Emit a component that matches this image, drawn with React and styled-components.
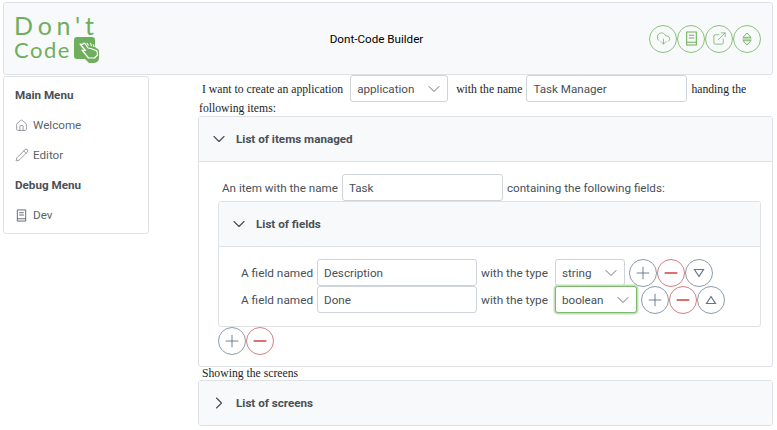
import styled, { createGlobalStyle } from "styled-components";
import { ChevronDown, ChevronRight, Plus, Minus, Home, Pencil, CloudDownload, ExternalLink } from "lucide-react";

const Global = createGlobalStyle`
    html, body { margin: 0; padding: 0; background: #fff; overflow: hidden; }
    body { font-family: "Liberation Serif", serif; font-size: 11.7px; color: #212529; }
`;

function BookIcon({ size = 14, color = "currentColor" }) {
    return (
        <svg width={size} height={size} viewBox="0 0 14 14" fill="none" stroke={color} strokeWidth="1">
            <path d="M2.5 1h9v12h-9z" />
            <path d="M2.5 10.500h9M4.500 4h5M4.500 6.500h5" />
        </svg>
    );
}

function UpDownIcon() {
    return (
        <svg width="14" height="14" viewBox="0 0 14 14" fill="none" stroke="#6fae5e" strokeWidth="0.9">
            <path d="M7 1 11 5.300H3z" />
            <path d="M2.500 7h9" />
            <path d="M7 13 11 8.700H3z" />
        </svg>
    );
}

function HandLogo() {
    return (
        <HandSvg width="26" height="27" viewBox="0 0 26 27">
            <path d="M3 0h15a3 3 0 0 1 3 3v7l4 3v8a5 5 0 0 1-5 5h-5l-4-4H3a3 3 0 0 1-3-3V3a3 3 0 0 1 3-3z" fill="#6fae5e" />
            <path d="M6 7l5.500 6.500-3.500-.5 6.500 8h6l3-3-.5-4-6-2.500-3-.5-3-4.500a1.300 1.300 0 0 0-2.200 1z" fill="#6fae5e" stroke="#fff" strokeWidth="1.200" strokeLinejoin="round" />
            <path d="M13 6l1.500 2.500M16.500 6l1 3M19.500 7.500l.5 2.500" stroke="#fff" strokeWidth="1.100" />
        </HandSvg>
    );
}

function TriangleIcon({ up }) {
    return (
        <svg width="12" height="10" viewBox="0 0 12 10" fill="none" stroke="#64748b" strokeWidth="1.200">
            <path d={up ? "M6 1.500 10.500 8.500H1.500z" : "M6 8.500 10.500 1.500H1.500z"} />
        </svg>
    );
}

function Round({ kind = "plain", children }) {
    return <RoundButton $kind={kind}>{children}</RoundButton>;
}

function Select({ value, width, focused, after = 4 }) {
    return (
        <SelectBox $width={width} $focused={focused} $after={after}>
            <span>{value}</span>
            <ChevronDown size={20} strokeWidth={1.2} color="#6c757d" />
        </SelectBox>
    );
}

function AddButton() {
    return <Round><Plus size={20} strokeWidth={1.1} color="#64748b" /></Round>;
}

function RemoveButton() {
    return <Round kind="danger"><Minus size={20} strokeWidth={1.700} color="#d0423f" /></Round>;
}

function FieldRow({ name, type, selectWidth, focused, up }) {
    return (
        <Row>
            <RowLabel>A field named</RowLabel>
            <TextBox $width={160}>{name}</TextBox>
            <RowLabel>with the type</RowLabel>
            <Select value={type} width={selectWidth} focused={focused} />
            <Buttons>
                <AddButton />
                <RemoveButton />
                <Round><TriangleIcon up={up} /></Round>
            </Buttons>
        </Row>
    );
}

export default function App() {
    return (
        <Page>
            <Global />
            <Header>
                <Logo>
                    <LogoTop>Don't</LogoTop>
                    <LogoBottom>Code<HandLogo /></LogoBottom>
                </Logo>
                <Title>Dont-Code Builder</Title>
                <HeaderButtons>
                    <GreenButton><CloudDownload size={15} strokeWidth={1.2} /></GreenButton>
                    <GreenButton><BookIcon size={15} color="#6fae5e" /></GreenButton>
                    <GreenButton><ExternalLink size={15} strokeWidth={1.2} /></GreenButton>
                    <GreenButton><UpDownIcon /></GreenButton>
                </HeaderButtons>
            </Header>
            <Body>
                <Side>
                    <SideTitle>Main Menu</SideTitle>
                    <SideItem><Home size={13} strokeWidth={1.1} />Welcome</SideItem>
                    <SideItem><Pencil size={14} strokeWidth={1.1} />Editor</SideItem>
                    <SideTitle>Debug Menu</SideTitle>
                    <SideItem><BookIcon size={13} />Dev</SideItem>
                </Side>
                <Main>
                    <Sentence>
                        I want to create an application
                        <Select value="application" width={98} after={8} />
                        with the name
                        <TextBox $width={161}>Task Manager</TextBox>
                        handing the following items:
                    </Sentence>
                    <Panel>
                        <PanelHead><ChevronDown size={20} strokeWidth={1.400} />List of items managed</PanelHead>
                        <ItemsBody>
                            <ItemLine>
                                An item with the name
                                <TextBox $width={161}>Task</TextBox>
                                containing the following fields:
                            </ItemLine>
                            <Panel>
                                <PanelHead><ChevronDown size={20} strokeWidth={1.400} />List of fields</PanelHead>
                                <FieldsBody>
                                    <FieldRow name="Description" type="string" selectWidth={70} />
                                    <FieldRow name="Done" type="boolean" selectWidth={82} focused up />
                                </FieldsBody>
                            </Panel>
                            <Buttons>
                                <AddButton />
                                <RemoveButton />
                            </Buttons>
                        </ItemsBody>
                    </Panel>
                    <Caption>Showing the screens</Caption>
                    <Panel>
                        <PanelHead $closed><ChevronRight size={20} strokeWidth={1.400} />List of screens</PanelHead>
                    </Panel>
                </Main>
            </Body>
        </Page>
    );
}

const Page = styled.div`
    width: 777px;
    height: 430px;
    box-sizing: border-box;
    padding: 2px 4px 0 3px;
    overflow: hidden;
`;

const Header = styled.header`
    box-sizing: border-box;
    height: 73px;
    display: flex;
    align-items: center;
    justify-content: space-between;
    padding: 0 11px 0 10px;
    background: #f8f9fa;
    border: 1px solid #dee2e6;
    border-radius: 3px;
`;

const Logo = styled.div`
    display: flex;
    flex-direction: column;
    color: #6fae5e;
    font-family: Lato, sans-serif;
    font-weight: 400;
    width: 90px;
`;

const LogoTop = styled.div`
    font-size: 25px;
    line-height: 22px;
    letter-spacing: 4.800px;
`;

const LogoBottom = styled.div`
    display: flex;
    align-items: center;
    gap: 3px;
    font-size: 22px;
    line-height: 27px;
    letter-spacing: 1.500px;
`;

const HandSvg = styled.svg`
    flex: none;
    margin-top: 1px;
`;

const Title = styled.div`
    font-family: Roboto, sans-serif;
    font-size: 11.650px;
    color: #000;
`;

const HeaderButtons = styled.div`
    display: flex;
`;

const GreenButton = styled.div`
    box-sizing: border-box;
    width: 28px;
    height: 28px;
    display: flex;
    align-items: center;
    justify-content: center;
    border: 1px solid #8cc27e;
    border-radius: 50%;
    color: #6fae5e;
`;

const Body = styled.div`
    display: flex;
    gap: 49px;
    align-items: flex-start;
`;

const Side = styled.nav`
    box-sizing: border-box;
    width: 146px;
    height: 158px;
    margin-top: 1px;
    padding: 3px 11px 0 11px;
    border: 1px solid #dee2e6;
    border-radius: 3px;
    font-family: Roboto, sans-serif;
    font-size: 11.650px;
    color: #495057;
    display: flex;
    flex-direction: column;
`;

const SideTitle = styled.div`
    height: 30px;
    line-height: 30px;
    font-weight: 700;
`;

const SideItem = styled.div`
    height: 30px;
    display: grid;
    grid-template-columns: 13px 1fr;
    align-items: center;
    column-gap: 5px;
    color: #5b646c;
`;

const Main = styled.main`
    flex: 1;
    min-width: 0;
`;

const Sentence = styled.div`
    padding-left: 1px;
    text-indent: 3px;
    line-height: 14px;
`;

const SelectBox = styled.span`
    box-sizing: border-box;
    display: inline-flex;
    text-indent: 0;
    align-items: center;
    justify-content: space-between;
    width: ${(p) => p.$width}px;
    height: 27px;
    margin: 0 ${(p) => p.$after}px 0 7px;
    padding: 0 3px 0 6px;
    background: #fff;
    border: 1px solid ${(p) => (p.$focused ? "#7db86e" : "#ced4da")};
    box-shadow: ${(p) => (p.$focused ? "0 0 0 1.500px #c3e0ba" : "none")};
    border-radius: 3px;
    font-family: Roboto, sans-serif;
    font-size: 11.650px;
    color: #495057;
`;

const TextBox = styled.span`
    box-sizing: border-box;
    display: inline-flex;
    text-indent: 0;
    align-items: center;
    width: ${(p) => p.$width}px;
    height: 27px;
    margin: 0 4px;
    padding: 0 6px;
    background: #fff;
    border: 1px solid #ced4da;
    border-radius: 3px;
    font-family: Roboto, sans-serif;
    font-size: 11.650px;
    color: #495057;
`;

const Panel = styled.section`
    border: 1px solid #dee2e6;
    border-radius: 3px;
    overflow: hidden;
`;

const PanelHead = styled.div`
    box-sizing: border-box;
    height: ${(p) => (p.$closed ? "44px" : "45px")};
    display: flex;
    align-items: center;
    gap: 7px;
    padding-left: 10px;
    background: #f8f9fa;
    border-bottom: ${(p) => (p.$closed ? "none" : "1px solid #dee2e6")};
    font-family: Roboto, sans-serif;
    font-size: 11.650px;
    font-weight: 700;
    color: #495057;
`;

const ItemsBody = styled.div`
    padding: 12px 11px 11px 19px;
`;

const ItemLine = styled.div`
    display: flex;
    align-items: center;
    height: 27px;
    margin: 0 0 0 4px;
    font-family: Roboto, sans-serif;
    font-size: 11.650px;
    color: #495057;
`;

const FieldsBody = styled.div`
    padding: 12px 0 13px 22px;
`;

const Row = styled.div`
    display: flex;
    align-items: center;
    height: 27px;
`;

const RowLabel = styled.span`
    font-family: Roboto, sans-serif;
    font-size: 11.800px;
    color: #495057;
`;

const Buttons = styled.div`
    display: flex;
`;

const RoundButton = styled.div`
    box-sizing: border-box;
    width: 28px;
    height: 28px;
    display: flex;
    align-items: center;
    justify-content: center;
    border: 1px solid ${(p) => (p.$kind === "danger" ? "#d47f7f" : "#8d9bab")};
    border-radius: 50%;
`;

const Caption = styled.div`
    padding: 0 0 0 4px;
    line-height: 13px;
`;
